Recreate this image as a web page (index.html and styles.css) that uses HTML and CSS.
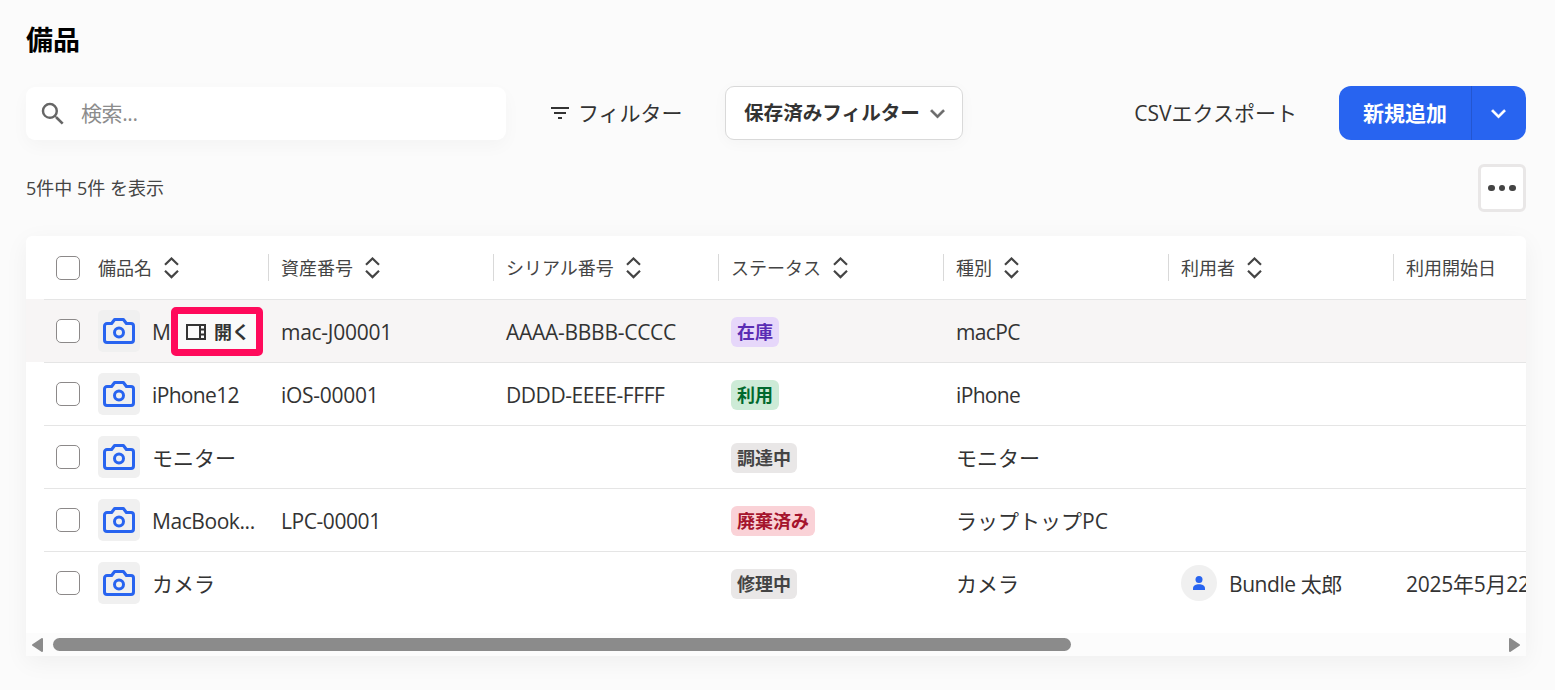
FILE: index.html
```html
<!DOCTYPE html>
<html lang="ja">
<head>
    <meta charset="UTF-8">
    <meta name="viewport" content="width=device-width, initial-scale=1.0">
    <title>備品</title>
    <link rel="stylesheet" href="styles.css">
</head>
<body>
    <!-- Shared icons -->
    <svg class="sprite" width="0" height="0">
        <symbol id="camera" viewBox="0 0 32 26">
            <path d="M4 5.500h4.600l3-4h8.800l3 4H28a2.500 2.500 0 0 1 2.500 2.500v14a2.500 2.500 0 0 1-2.500 2.500H4A2.500 2.500 0 0 1 1.500 22V8A2.500 2.500 0 0 1 4 5.500z" fill="none" stroke="currentColor" stroke-width="3" stroke-linejoin="round"/>
            <circle cx="16" cy="14.500" r="4.500" fill="none" stroke="currentColor" stroke-width="3"/>
        </symbol>
        <symbol id="sort" viewBox="0 0 15 22">
            <path d="M1 7.800L7.500 1.500l6.500 6.300M1 13.800l6.500 6.300 6.500-6.300" fill="none" stroke="currentColor" stroke-width="2.200"/>
        </symbol>
        <symbol id="chevron" viewBox="0 0 24 24">
            <path d="M7.410 8.590L12 13.170l4.590-4.580L18 10l-6 6-6-6z" fill="currentColor" stroke="currentColor" stroke-width=".3"/>
        </symbol>
    </svg>

    <h1>備品</h1>

    <div class="toolbar">
        <div class="search">
            <svg width="30" height="30" viewBox="0 0 24 24"><path d="M15.500 14h-.79l-.28-.27A6.471 6.471 0 0 0 16 9.500 6.500 6.500 0 1 0 9.500 16c1.610 0 3.090-.59 4.230-1.570l.27.28v.79l5 4.990L20.490 19l-4.990-5zm-6 0C7.010 14 5 11.990 5 9.500S7.010 5 9.500 5 14 7.010 14 9.500 11.990 14 9.500 14z" fill="currentColor"/></svg>
            <span>検索...</span>
        </div>
        <div class="filter">
            <svg width="18" height="12" viewBox="0 0 18 12"><path d="M0 0h18v2H0zM3 5h12v2H3zM7 10h4v2H7z" fill="currentColor"/></svg>
            <span>フィルター</span>
        </div>
        <button class="saved">
            <span>保存済みフィルター</span>
            <svg width="29" height="29"><use href="#chevron"/></svg>
        </button>
        <div class="export">CSVエクスポート</div>
        <div class="add">
            <button class="add-main">新規追加</button>
            <button class="add-menu"><svg width="29" height="29"><use href="#chevron"/></svg></button>
        </div>
    </div>

    <div class="summary">
        <span class="count">5件中 5件 を表示</span>
        <button class="more"><i></i><i></i><i></i></button>
    </div>

    <div class="card">
        <div class="table">
            <div class="row head">
                <div class="cells">
                    <div class="cell name"><span class="check"></span>備品名<svg class="sort"><use href="#sort"/></svg></div>
                    <div class="cell">資産番号<svg class="sort"><use href="#sort"/></svg></div>
                    <div class="cell">シリアル番号<svg class="sort"><use href="#sort"/></svg></div>
                    <div class="cell">ステータス<svg class="sort"><use href="#sort"/></svg></div>
                    <div class="cell">種別<svg class="sort"><use href="#sort"/></svg></div>
                    <div class="cell">利用者<svg class="sort"><use href="#sort"/></svg></div>
                    <div class="cell">利用開始日</div>
                </div>
            </div>
            <div class="row active">
                <div class="cells">
                    <div class="cell name">
                        <span class="check"></span><span class="thumb"><svg><use href="#camera"/></svg></span><span class="text">M</span>
                        <div class="open">
                            <svg width="20" height="16" viewBox="0 0 20 16"><path d="M1 1h18v14H1zM14 1v14M14 5.500h5M14 10.500h5" fill="none" stroke="currentColor" stroke-width="2"/></svg>
                            <span>開く</span>
                        </div>
                    </div>
                    <div class="cell"><span class="text code">mac-J00001</span></div>
                    <div class="cell"><span class="text code">AAAA-BBBB-CCCC</span></div>
                    <div class="cell"><span class="tag purple">在庫</span></div>
                    <div class="cell"><span class="text tight">macPC</span></div>
                    <div class="cell"></div>
                    <div class="cell"></div>
                </div>
            </div>
            <div class="row">
                <div class="cells">
                    <div class="cell name"><span class="check"></span><span class="thumb"><svg><use href="#camera"/></svg></span><span class="text tight">iPhone12</span></div>
                    <div class="cell"><span class="text code">iOS-00001</span></div>
                    <div class="cell"><span class="text snug">DDDD-EEEE-FFFF</span></div>
                    <div class="cell"><span class="tag green">利用</span></div>
                    <div class="cell"><span class="text tight">iPhone</span></div>
                    <div class="cell"></div>
                    <div class="cell"></div>
                </div>
            </div>
            <div class="row">
                <div class="cells">
                    <div class="cell name"><span class="check"></span><span class="thumb"><svg><use href="#camera"/></svg></span><span class="text">モニター</span></div>
                    <div class="cell"></div>
                    <div class="cell"></div>
                    <div class="cell"><span class="tag gray">調達中</span></div>
                    <div class="cell"><span class="text">モニター</span></div>
                    <div class="cell"></div>
                    <div class="cell"></div>
                </div>
            </div>
            <div class="row">
                <div class="cells">
                    <div class="cell name"><span class="check"></span><span class="thumb"><svg><use href="#camera"/></svg></span><span class="text snug">MacBook...</span></div>
                    <div class="cell"><span class="text snug">LPC-00001</span></div>
                    <div class="cell"></div>
                    <div class="cell"><span class="tag red">廃棄済み</span></div>
                    <div class="cell"><span class="text">ラップトップPC</span></div>
                    <div class="cell"></div>
                    <div class="cell"></div>
                </div>
            </div>
            <div class="row">
                <div class="cells">
                    <div class="cell name"><span class="check"></span><span class="thumb"><svg><use href="#camera"/></svg></span><span class="text">カメラ</span></div>
                    <div class="cell"></div>
                    <div class="cell"></div>
                    <div class="cell"><span class="tag gray">修理中</span></div>
                    <div class="cell"><span class="text">カメラ</span></div>
                    <div class="cell">
                        <span class="avatar"><svg width="12" height="14" viewBox="0 0 12 14"><circle cx="6" cy="3.500" r="3.500" fill="currentColor"/><path d="M0 14v-1.500C0 9.600 3 8.300 6 8.300s6 1.300 6 4.200V14z" fill="currentColor"/></svg></span>
                        <span class="text snug">Bundle 太郎</span>
                    </div>
                    <div class="cell"><span class="text code">2025年5月22</span></div>
                </div>
            </div>
        </div>
        <div class="scrollbar">
            <svg width="11" height="14" viewBox="0 0 11 14"><path d="M10 1v12L1 7z" fill="currentColor" stroke="currentColor" stroke-width="2" stroke-linejoin="round"/></svg>
            <div class="track"><div class="bar"></div></div>
            <svg width="11" height="14" viewBox="0 0 11 14"><path d="M1 1v12l9-6z" fill="currentColor" stroke="currentColor" stroke-width="2" stroke-linejoin="round"/></svg>
        </div>
    </div>
</body>
</html>
```
FILE: styles.css
```css
* {
    box-sizing: border-box;
}

body {
    margin: 0;
    height: 690px;
    padding: 20px 29px 0 26px;
    overflow: hidden;
    background-color: #fbfbfb;
    color: #333;
    font-family: "Open Sans", "Noto Sans CJK JP", sans-serif;
    font-size: 21px;
}

.sprite {
    display: block;
}

button {
    padding: 0;
    border: none;
    color: inherit;
    font: inherit;
}

svg {
    flex: none;
}

h1 {
    margin: 0;
    height: 66px;
    color: #000;
    font-size: 27px;
    line-height: 40px;
}

.toolbar {
    display: flex;
    align-items: center;
    height: 54px;
    line-height: 30px;
    white-space: nowrap;
}

.search {
    display: flex;
    align-items: center;
    gap: 13px;
    width: 480px;
    height: 53px;
    padding-left: 12px;
    border-radius: 9px;
    background-color: #fff;
    box-shadow: 0 6px 18px rgba(0, 0, 0, 0.03);
    color: #8c8c8c;
    letter-spacing: -0.4px;
}

.search svg {
    margin-top: 2px;
    color: #666;
}

.filter {
    display: flex;
    align-items: center;
    gap: 9px;
    margin-left: 45px;
    width: 174px;
}

.saved {
    display: flex;
    align-items: center;
    justify-content: space-between;
    width: 238px;
    height: 54px;
    padding: 0 10px 0 18px;
    border: 1px solid #d9d9d9;
    border-radius: 9px;
    background-color: #fff;
    box-shadow: 0 3px 15px rgba(0, 0, 0, 0.03);
    font-size: 19.6px;
    font-weight: bold;
}

.saved svg {
    color: #6b6b6b;
}

.export {
    margin-left: auto;
    margin-right: 42px;
}

.add {
    display: flex;
    width: 187px;
    height: 54px;
    border-radius: 12px;
    overflow: hidden;
    color: #fff;
}

.add-main {
    width: 133px;
    border-right: 1px solid #2456d0;
    background-color: #2864f0;
    font-weight: bold;
}

.add-menu {
    display: flex;
    align-items: center;
    justify-content: center;
    width: 54px;
    padding-right: 1px;
    background-color: #2864f0;
}

.summary {
    display: flex;
    align-items: center;
    justify-content: space-between;
    margin: 24px 0;
    height: 48px;
}

.count {
    padding-bottom: 2px;
    color: #444;
    font-size: 18px;
}

.more {
    display: flex;
    align-items: center;
    justify-content: center;
    gap: 4px;
    width: 48px;
    height: 48px;
    border: 3px solid #e9e7e7;
    border-radius: 6px;
    background-color: #fff;
}

.more i {
    width: 6.5px;
    height: 6.5px;
    border-radius: 50%;
    background-color: #444;
}

.card {
    width: 1500px;
    height: 420px;
    border-radius: 6px 6px 0 0;
    background-color: #fff;
    box-shadow: 0 6px 24px rgba(0, 0, 0, 0.05);
}

.table {
    height: 397px;
    overflow: hidden;
    border-radius: 6px 6px 0 0;
}

.row {
    padding-left: 18px;
    height: 63px;
}

.cells {
    display: grid;
    grid-template-columns: 224px repeat(6, 225px);
    height: 63px;
    border-top: 1px solid #e5e5e5;
}

.head .cells {
    border-top-color: transparent;
}

.active {
    background-color: #f7f5f5;
}

.cell {
    position: relative;
    display: flex;
    align-items: center;
    padding-left: 13px;
    line-height: 30px;
    white-space: nowrap;
}

.name {
    padding-left: 12px;
}

.head .cell {
    color: #444;
    font-size: 18px;
}

.head .cell + .cell {
    height: 27px;
    margin-top: 17px;
    padding-left: 12px;
    border-left: 1px solid #d9d9d9;
}

.sort {
    width: 15px;
    height: 22px;
    margin-left: 12px;
}

.text,
.tag {
    margin-top: 2px;
}

.code {
    letter-spacing: -0.27px;
}

.snug {
    letter-spacing: -0.43px;
}

.tight {
    letter-spacing: -0.65px;
}

.check {
    flex: none;
    width: 24px;
    height: 24px;
    margin-right: 18px;
    border: 1px solid #8c8989;
    border-radius: 5px;
    background-color: #fff;
}

.thumb {
    display: flex;
    align-items: center;
    justify-content: center;
    width: 42px;
    height: 42px;
    margin-right: 12px;
    border-radius: 5px;
    background-color: #f0f0f0;
    color: #2864f0;
}

.thumb svg {
    width: 32px;
    height: 26px;
}

/* hover action, shown over the item name */
.open {
    position: absolute;
    top: 7px;
    left: 127px;
    display: flex;
    align-items: center;
    gap: 8px;
    width: 92px;
    height: 49px;
    padding-left: 8px;
    border: 7px solid #ff0a5b;
    border-radius: 5px;
    background-color: #fafafa;
    font-size: 18px;
    font-weight: bold;
}

.tag {
    height: 30px;
    padding: 0 6px;
    border-radius: 6px;
    font-size: 18px;
    font-weight: bold;
}

.purple {
    background-color: #e6d7fa;
    color: #5a2db4;
}

.green {
    background-color: #cdebd7;
    color: #00692d;
}

.gray {
    background-color: #e9e7e7;
    color: #444;
}

.red {
    background-color: #fad2d7;
    color: #a5142d;
}

.avatar {
    display: flex;
    align-items: center;
    justify-content: center;
    width: 36px;
    height: 36px;
    margin-right: 12px;
    border-radius: 50%;
    background-color: #f0f0f0;
    color: #2864f0;
}

.scrollbar {
    display: flex;
    align-items: center;
    height: 23px;
    padding: 0 6px;
    background-color: #fcfcfc;
    color: #8b8b8b;
}

.track {
    flex: 1;
    padding-left: 10px;
}

.bar {
    width: 1018px;
    height: 13px;
    border-radius: 7px;
    background-color: #8b8b8b;
}
```
